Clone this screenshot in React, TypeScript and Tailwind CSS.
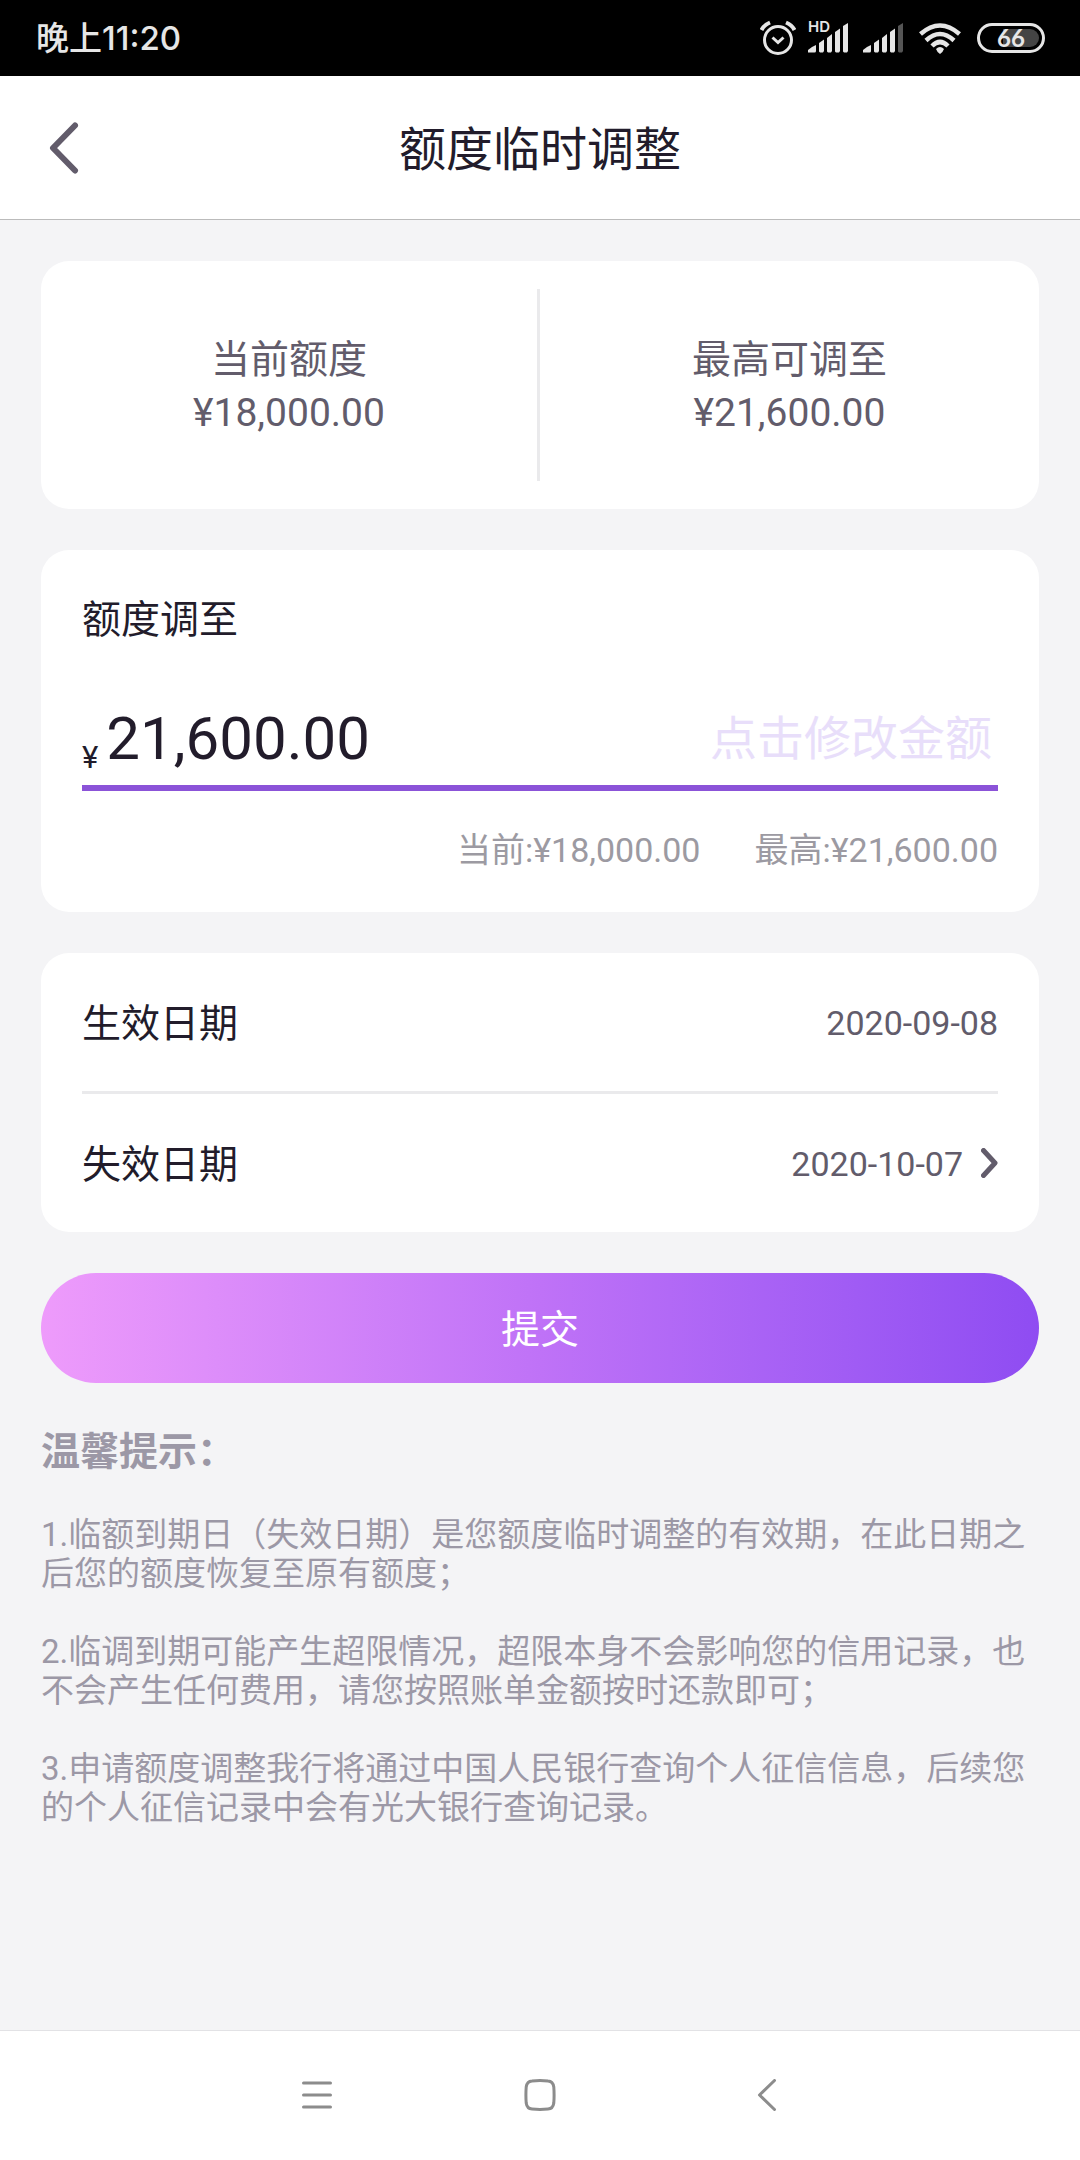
import React from 'react';

const NOTES = [
  '1.临额到期日（失效日期）是您额度临时调整的有效期，在此日期之后您的额度恢复至原有额度；',
  '2.临调到期可能产生超限情况，超限本身不会影响您的信用记录，也不会产生任何费用，请您按照账单金额按时还款即可；',
  '3.申请额度调整我行将通过中国人民银行查询个人征信信息，后续您的个人征信记录中会有光大银行查询记录。',
];

const AlarmIcon = () => (
  <svg width="36" height="36" viewBox="0 0 36 36" fill="none" stroke="#e6e6e6" strokeWidth="3">
    <circle cx="18" cy="20" r="13.5" />
    <path d="M12.5 17.5 L18 22.5 L23.5 17.5" />
    <path d="M1.5 10 Q4 5 10 2.5 M34.5 10 Q32 5 26 2.5" strokeWidth="4" />
  </svg>
);

const SignalIcon = ({ weak = false }: { weak?: boolean }) => (
  <svg width="41" height="30" viewBox="0 0 41 30" fill="#e6e6e6">
    <path d="M0 29.5 V27 Q3 24 8 22 V28 Q8 29.5 6.5 29.5 Z" />
    <path d="M11 20 L16 16.5 V28 L15 29.5 H12 L11 28.5 Z" />
    <path d="M19 15 L24 11 V28 L23 29.5 H20 L19 28.5 Z" />
    <path d="M27 9 L32 5.5 V28 L31 29.5 H28 L27 28.5 Z" />
    <path d="M35 3 L40 0 V28 L39 29.5 H36 L35 28.5 Z" fill={weak ? '#555555' : '#e6e6e6'} />
  </svg>
);

const WifiIcon = () => (
  <svg width="42" height="31" viewBox="0 0 42 31" fill="none" stroke="#e6e6e6" strokeWidth="4.5">
    <path d="M1.5 11 Q21 -6 40.5 11" />
    <path d="M7 17.5 Q21 4.5 35 17.5" />
    <path d="M13 23 Q21 15 29 23" />
    <path d="M17 26 Q21 22 25 26 Q23.5 30 21 31 Q18.5 30 17 26 Z" fill="#e6e6e6" stroke="none" />
  </svg>
);

const StatusBar = () => (
  <div className="flex h-[76px] items-center justify-between bg-black pr-[35px] pl-9 text-[#e6e6e6]">
    <span className="pt-0.5 font-['Inter','Noto_Sans_CJK_SC',sans-serif] text-[33px] font-medium">晚上11:20</span>
    <div className="flex items-center">
      <AlarmIcon />
      <div className="relative ml-3">
        <SignalIcon />
        <span className="absolute -top-1 -left-1 bg-black pl-1 font-['Inter',sans-serif] text-[15px] leading-4 font-semibold">HD</span>
      </div>
      <div className="ml-[14px]">
        <SignalIcon weak />
      </div>
      <div className="ml-[15px]">
        <WifiIcon />
      </div>
      <div className="relative ml-4 flex h-[30px] w-[68px] items-center justify-center rounded-full border-3 border-[#e6e6e6]">
        <div className="absolute top-[3px] right-[3px] h-[18px] w-9 rounded-r-full bg-[#444444]" />
        <span className="relative font-['Lato',sans-serif] text-2xl font-bold">66</span>
      </div>
    </div>
  </div>
);

const Header = () => (
  <header className="relative flex h-36 items-center justify-center border-b border-[#bbbbbb] bg-white">
    <button type="button" aria-label="返回" className="absolute left-[49px]">
      <svg width="30" height="52" viewBox="0 0 30 52" fill="none" stroke="#625c6b" strokeWidth="6" strokeLinecap="round" strokeLinejoin="round">
        <path d="M26 3.5 L4 26 L26 48.5" />
      </svg>
    </button>
    <h1 className="pt-1 text-[47px] leading-[60px] text-[#221c2b]">额度临时调整</h1>
  </header>
);

const LimitSummary = () => (
  <section className="grid grid-cols-2 rounded-[28px] bg-white py-7 text-center text-[39px] leading-[53px] text-[#625c6b]">
    <div className="flex h-48 flex-col justify-center border-r-3 border-[#eaeaec] pt-1">
      <p>当前额度</p>
      <p>¥18,000.00</p>
    </div>
    <div className="flex h-48 flex-col justify-center pt-1">
      <p>最高可调至</p>
      <p>¥21,600.00</p>
    </div>
  </section>
);

const AmountForm = () => (
  <section className="rounded-[28px] bg-white px-[41px] pt-11 pb-[41px] text-[#221c2b]">
    <label htmlFor="amount" className="block text-[39px] leading-[53px]">额度调至</label>
    <div className="mt-[46px] flex h-[98px] items-center border-b-6 border-[#8b53d8]">
      <span className="mr-2 self-end pb-2 text-[31px] leading-[38px]">¥</span>
      <span className="text-[60px] leading-[72px]">21,600.00</span>
      <input
        id="amount"
        type="text"
        placeholder="点击修改金额"
        className="min-w-0 flex-1 pr-1.5 text-right text-[47px] leading-[60px] outline-none placeholder:text-[#e8defa]"
      />
    </div>
    <div className="mt-[38px] flex justify-end gap-[54px] text-[34px] leading-[42px] text-[#9c9aa2]">
      <span>当前:¥18,000.00</span>
      <span>最高:¥21,600.00</span>
    </div>
  </section>
);

const DateRows = () => (
  <section className="rounded-[28px] bg-white px-[41px] text-[39px] text-[#221c2b]">
    <div className="flex h-[138px] items-center justify-between">
      <span className="pt-1">生效日期</span>
      <span className="pt-0.5 text-[34px] text-[#625c6b]">2020-09-08</span>
    </div>
    <div className="h-[3px] bg-[#eaeaec]" />
    <button type="button" className="flex h-[138px] w-full items-center justify-between">
      <span className="pt-1">失效日期</span>
      <span className="flex items-center gap-[18px] text-[34px] text-[#625c6b]">
        <span className="pt-0.5">2020-10-07</span>
        <svg width="17" height="30" viewBox="0 0 17 30" fill="none" stroke="#625c6b" strokeWidth="5" strokeLinecap="round" strokeLinejoin="round">
          <path d="M2.5 2.5 L14 15 L2.5 27.5" />
        </svg>
      </span>
    </button>
  </section>
);

const NavBar = () => (
  <nav className="flex h-[130px] items-center justify-center gap-[191px] border-t border-[#e2e2e5] bg-white pb-0.5">
    <button type="button" aria-label="菜单">
      <svg width="32" height="32" viewBox="0 0 32 32" stroke="#8c8c8c" strokeWidth="3" strokeLinecap="round">
        <path d="M2.5 4 H29.5 M2.5 16 H29.5 M2.5 28 H29.5" />
      </svg>
    </button>
    <button type="button" aria-label="主页">
      <svg width="32" height="32" viewBox="0 0 32 32" fill="none" stroke="#8c8c8c" strokeWidth="3">
        <path d="M8 2 Q16 1.2 24 2 Q29 2.3 29.8 8 Q30.4 16 29.8 24 Q29 29.7 24 30 Q16 30.8 8 30 Q3 29.7 2.2 24 Q1.6 16 2.2 8 Q3 2.3 8 2 Z" />
      </svg>
    </button>
    <button type="button" aria-label="后退">
      <svg width="32" height="32" viewBox="0 0 32 32" fill="none" stroke="#8c8c8c" strokeWidth="3" strokeLinecap="round" strokeLinejoin="round">
        <path d="M27.5 1.5 L12.5 16 L27.5 30.5" />
      </svg>
    </button>
  </nav>
);

const App: React.FC = () => {
  return (
    <div lang="zh-CN" className="flex min-h-screen flex-col bg-[#f4f4f6] font-['Roboto','Noto_Sans_CJK_SC',sans-serif]">
      <StatusBar />
      <Header />

      <main className="flex flex-1 flex-col gap-[41px] p-[41px]">
        <LimitSummary />
        <AmountForm />
        <DateRows />

        <button
          type="button"
          className="h-[110px] w-full rounded-full bg-linear-to-r from-[#ee9bfb] via-[#bf72f7] to-[#8f4cf2] pt-1 text-[39px] text-white"
        >
          提交
        </button>

        {/* Notes */}
        <section className="text-[#9c98a6]">
          <h2 className="text-[39px] leading-[56px] font-bold">温馨提示：</h2>
          <div className="mt-[35px] flex flex-col gap-[39px] text-[33px] leading-[39px]">
            {NOTES.map((note) => (
              <p key={note}>{note}</p>
            ))}
          </div>
        </section>
      </main>

      <NavBar />
    </div>
  );
};

export default App;
